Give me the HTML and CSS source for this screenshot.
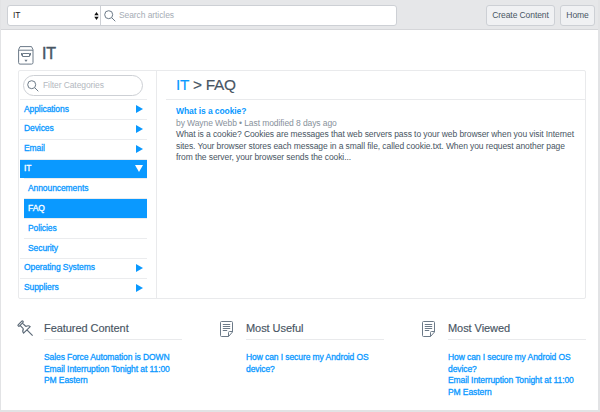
FILE: index.html
```html
<!DOCTYPE html>
<html lang="en">
<head>
<meta charset="utf-8">
<title>IT - FAQ</title>
<link rel="stylesheet" href="styles.css">
</head>
<body>
<svg class="defs" width="0" height="0" aria-hidden="true">
  <symbol id="search" viewBox="0 0 12 12"><circle cx="4.7" cy="4.7" r="4"/><path d="M7.7 7.7 11.3 11.3"/></symbol>
  <symbol id="doc" viewBox="0 0 13 16"><path d="M1.5.5h10q1 0 1 1v9.5L8.5 15.5h-7q-1 0-1-1v-13q0-1 1-1zM12.5 10.5h-3q-1 0-1 1v4M2.8 3.5h7.4M2.8 5.5h7.4M2.8 7.5h7.4M2.8 9.5h4.4"/></symbol>
</svg>
<header class="topbar">
  <div class="searchbox">
    <div class="select"><span>IT</span><svg width="5" height="8" viewBox="0 0 5 8"><path d="M.3 3.3 2.5 0l2.2 3.3zM.3 4.7h4.4L2.5 8z"/></svg></div>
    <div class="query"><svg class="icon" width="12" height="12"><use href="#search"/></svg><span>Search articles</span></div>
  </div>
  <nav class="actions"><button class="btn create">Create Content</button><button class="btn home">Home</button></nav>
</header>
<main>
  <div class="title">
    <svg class="icon" width="16" height="19" viewBox="0 0 16 19"><path d="M2 .6h11.5l1.5 3v13q0 1.5-1.5 1.5H2q-1.4 0-1.4-1.5v-13zM.6 4.2H15M4.5 7.5h7v3h-7zM3.5 7v2.5M12.5 7v2.5"/><path class="solid" d="M6.4 13.7h3.2L8 16z"/></svg>
    <h1>IT</h1>
  </div>
  <section class="panel">
    <aside class="sidebar">
      <div class="filter"><svg class="icon" width="12" height="12"><use href="#search"/></svg><span>Filter Categories</span></div>
      <ul class="cats">
        <li><a>Applications</a><i class="arrow"></i></li>
        <li><a>Devices</a><i class="arrow"></i></li>
        <li><a>Email</a><i class="arrow"></i></li>
        <li class="active"><a>IT</a><i class="arrow down"></i></li>
        <li class="sub"><a>Announcements</a></li>
        <li class="sub active"><a>FAQ</a></li>
        <li class="sub"><a>Policies</a></li>
        <li class="sub"><a>Security</a></li>
        <li><a>Operating Systems</a><i class="arrow"></i></li>
        <li><a>Suppliers</a><i class="arrow"></i></li>
      </ul>
    </aside>
    <article class="content">
      <h2><a>IT</a> &gt; FAQ</h2>
      <div class="entry">
        <h3>What is a cookie?</h3>
        <p class="meta">by Wayne Webb • Last modified 8 days ago</p>
        <p>What is a cookie? Cookies are messages that web servers pass to your web browser when you visit Internet<br>sites. Your browser stores each message in a small file, called cookie.txt. When you request another page<br>from the server, your browser sends the cooki...</p>
      </div>
    </article>
  </section>
  <section class="lists">
    <div class="list featured">
      <svg class="icon pin" width="16" height="16" viewBox="0 0 16 16"><g transform="translate(2.6 2.6) rotate(-45)"><path d="M-2.6-.9h5.2q.7 0 .7.9t-.7.9h-5.2q-.7 0-.7-.9t.7-.9zM-1.7.9v4.9M1.7.9v4.9M-1.7 5.8q-2.8.6-3 3.1h9.4q-.2-2.5-3-3.1M0 8.9V17"/></g></svg>
      <div class="col"><h4>Featured Content</h4><p><a>Sales Force Automation is DOWN</a><br><a>Email Interruption Tonight at 11:00<br>PM Eastern</a></p></div>
    </div>
    <div class="list useful">
      <svg class="icon" width="13" height="16"><use href="#doc"/></svg>
      <div class="col"><h4>Most Useful</h4><p><a>How can I secure my Android OS<br>device?</a></p></div>
    </div>
    <div class="list viewed">
      <svg class="icon" width="13" height="16"><use href="#doc"/></svg>
      <div class="col"><h4>Most Viewed</h4><p><a>How can I secure my Android OS<br>device?</a><br><a>Email Interruption Tonight at 11:00<br>PM Eastern</a></p></div>
    </div>
  </section>
</main>
</body>
</html>
```
FILE: styles.css
```css
* { box-sizing: border-box; }
body {
  margin: 0; width: 600px; height: 412px; overflow: hidden;
  background: #fff; color: #485563;
  border: 1px solid #e2e3e5; border-right-width: 2px; border-bottom-width: 2px; border-top: 0;
  font: 8.5px/11.6px "Liberation Sans", Arial, sans-serif; letter-spacing: -.085px;
}
h1, h2, h3, h4, p, ul { margin: 0; padding: 0; font-weight: normal; }
ul { list-style: none; }
a, h3 { color: #0a99ff; }
.defs { display: block; height: 0; }
.icon { fill: none; stroke: #6c7a88; stroke-width: 1; flex: none; stroke-linejoin: round; }
.pin { overflow: visible; stroke: #5b6977; stroke-width: 1.15; }
.solid { fill: #6c7a88; stroke: none; }
.topbar {
  display: flex; justify-content: space-between; height: 30px;
  padding: 5px 3px 0 6px; background: #e6e7e9; border-bottom: 1px solid #d5d6d9;
}
.searchbox { display: flex; width: 390px; height: 21px; background: #fff; border: 1px solid #cdd0d5; border-radius: 3px; }
.select { display: flex; justify-content: space-between; align-items: center; width: 93px; padding: 0 1px 0 5px; border-right: 1px solid #cdd0d5; color: #222; }
.select svg { fill: #111; }
.query { display: flex; align-items: center; gap: 3px; padding-left: 3px; color: #a5acb5; }
.actions { display: flex; gap: 5px; }
.btn { height: 21px; padding: 0; background: #f0f1f3; border: 1px solid #cdd0d5; border-radius: 3px; color: #485563; font: inherit; letter-spacing: inherit; }
.create { width: 69px; }
.home { width: 35px; }
.title { display: flex; height: 40px; padding: 16px 0 0 17px; }
h1 { margin-left: 8px; font-size: 16px; line-height: 16px; -webkit-text-stroke: .45px; }
.panel { display: flex; width: 568px; height: 229px; margin-left: 17px; border: 1px solid #e9eaec; border-radius: 2px; }
.sidebar { flex: none; width: 138px; border-right: 1px solid #e9eaec; padding: 4px 9px 0 1px; }
.filter { display: flex; align-items: center; gap: 4px; width: 120px; height: 21px; margin-left: 3px; padding-left: 3px; border: 1px solid #cdd0d5; border-radius: 11px; color: #b3b8c0; }
.cats { margin-top: 3px; }
.cats li { display: flex; justify-content: space-between; align-items: center; height: 19.85px; padding: 0 4px; border-top: 1px solid #ebecee; }
.cats a, .list p a { -webkit-text-stroke: .3px; }
.cats .sub { margin-left: 4px; }
.cats .active { background: #0a99ff; }
.active a { color: #fff; }
.arrow { border-left: 7px solid #0a99ff; border-top: 4px solid transparent; border-bottom: 4px solid transparent; }
.arrow.down { border-top: 7px solid #fff; border-left: 4px solid transparent; border-right: 4px solid transparent; border-bottom: 0; }
.content { flex: 1; min-width: 0; padding-left: 9px; }
h2 { height: 29px; padding: 5px 0 0 10px; border-bottom: 1px solid #e9eaec; font-size: 15.4px; line-height: 18px; letter-spacing: -.25px; -webkit-text-stroke: .15px; }
.entry { padding: 6px 0 0 10px; white-space: nowrap; }
h3 { font-size: inherit; font-weight: bold; }
.meta { color: #88919b; }
.lists { display: flex; padding: 21px 0 0 17px; }
.list { display: flex; }
.featured { width: 202px; gap: 10px; }
.useful { width: 202px; gap: 13px; }
.viewed { gap: 13px; }
.lists .icon { margin-top: 1px; }
.col { width: 138px; white-space: nowrap; }
h4 { height: 20px; border-bottom: 1px solid #e9eaec; font-size: 11px; line-height: 16px; letter-spacing: -.06px; -webkit-text-stroke: .15px; }
.col p { padding-top: 12px; }
```
